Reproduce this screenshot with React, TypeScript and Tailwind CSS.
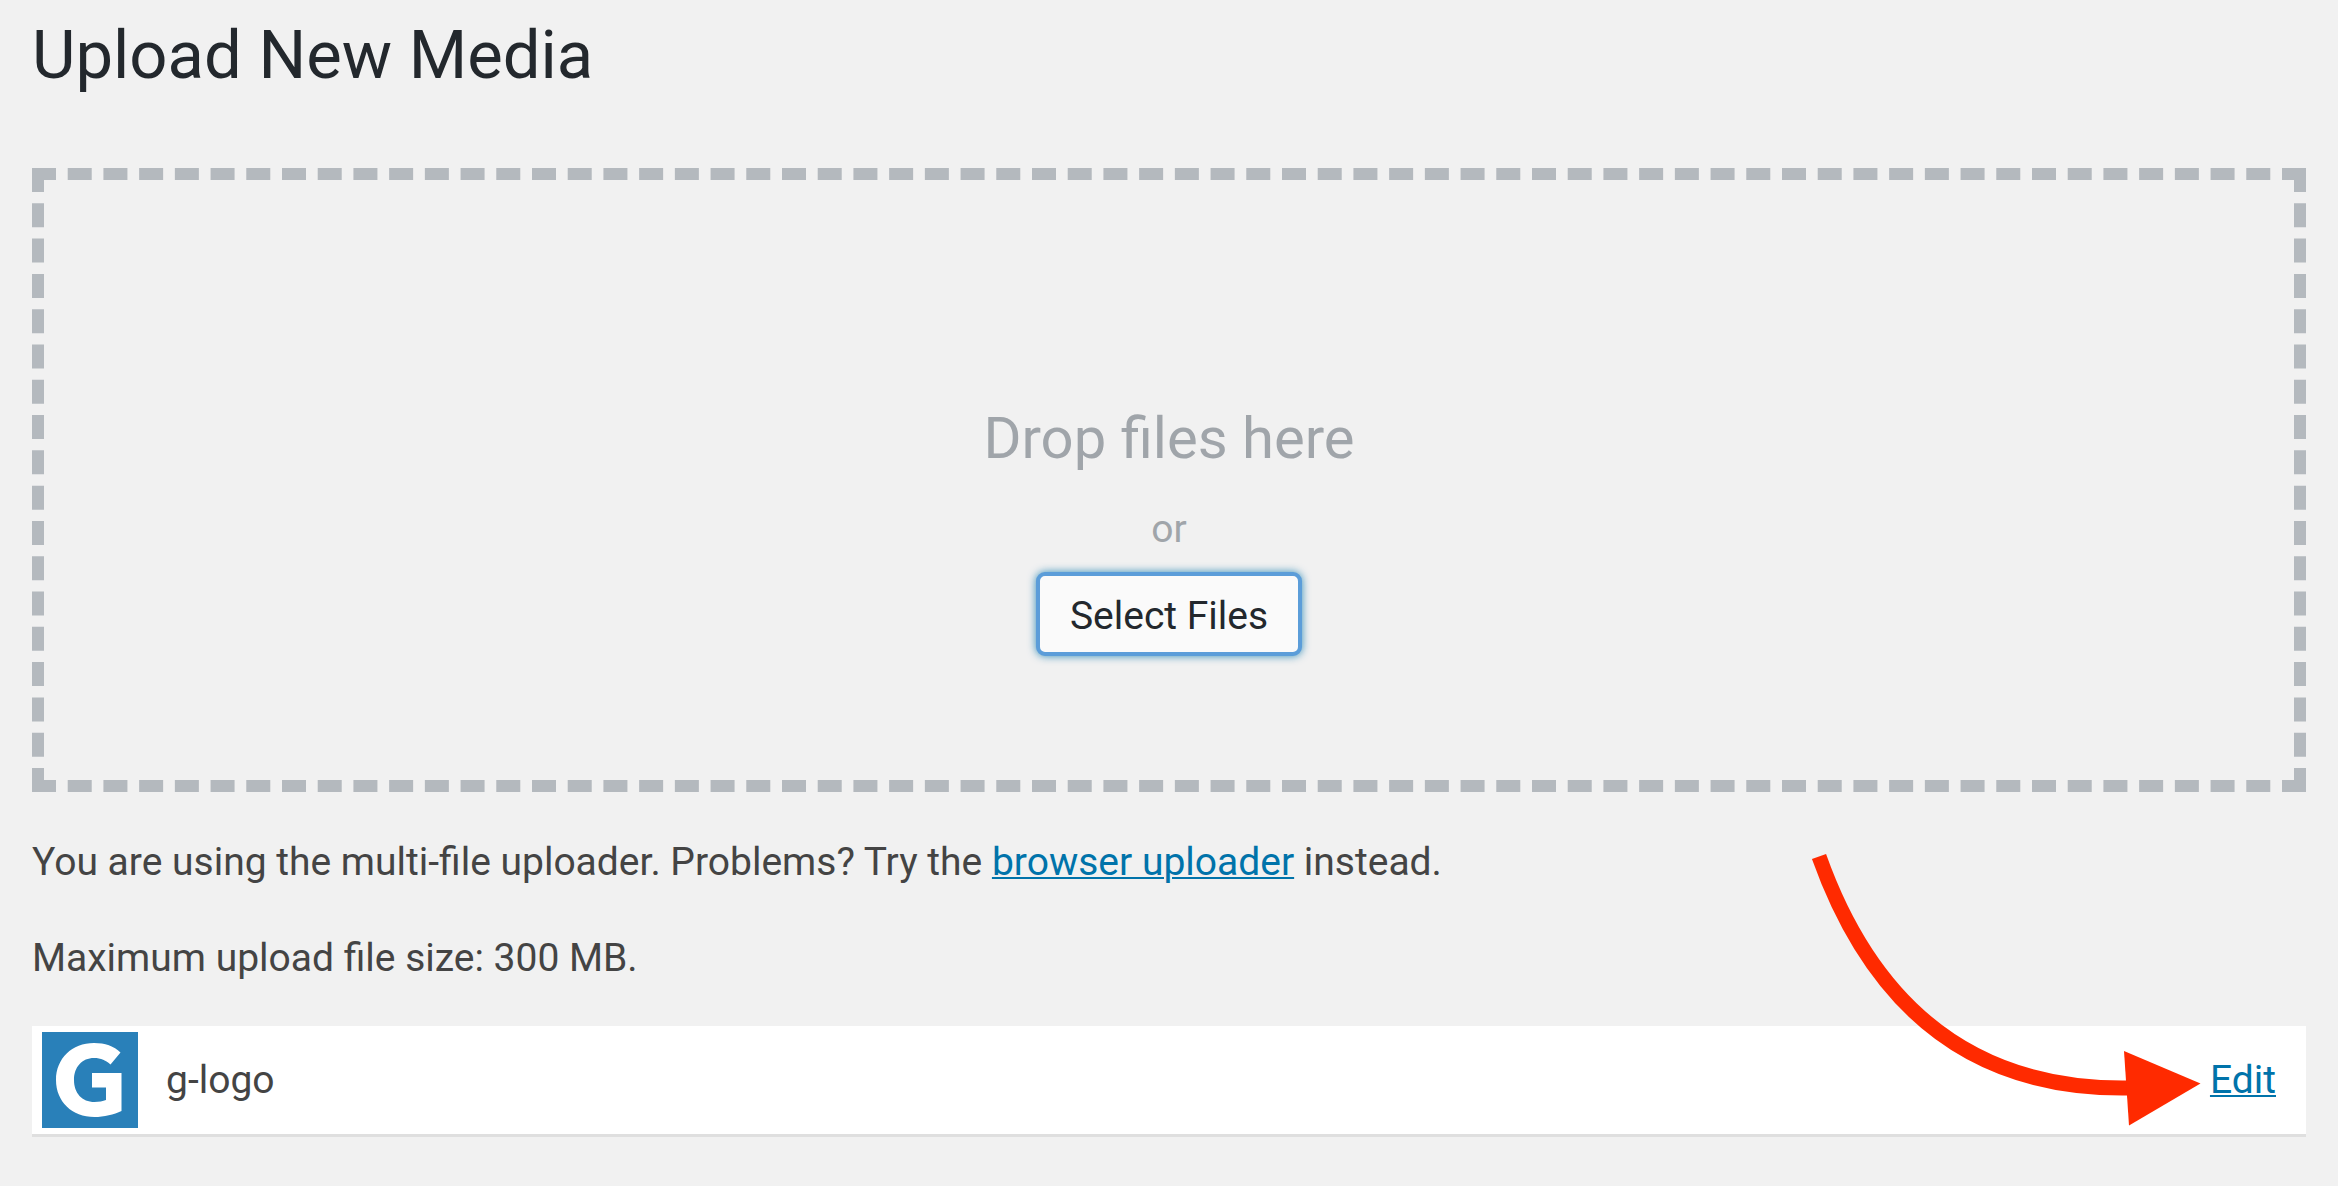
import React, { useRef } from 'react';

const GLogo: React.FC = () => (
  <svg viewBox="0 0 96 96" className="size-24 shrink-0" role="img" aria-label="g-logo thumbnail">
    <rect width="96" height="96" fill="#2980b9" />
    <path
      fill="#fff"
      d="M78.500 20.500C72 14 63 11 52 11C30 11 14 26.500 14 48C14 69.500 30 85 52.500 85C62 85 72 82.500 79.500 79V41H50V55.500H64V68C61 69.300 57 70 52.500 70C40 70 32 61 32 48C32 35 40 26 52 26C59 26 64 28.500 68.500 32.500Z"
    />
  </svg>
);

const Arrow: React.FC = () => (
  <svg
    viewBox="0 0 410 280"
    className="absolute bottom-1 right-24 w-[410px] h-[280px] pointer-events-none"
    aria-hidden="true"
  >
    <path d="M19 6.500Q103 242 330 238" fill="none" stroke="#ff2a00" strokeWidth="15" />
    <path d="M324 201L400.500 233.500L329 275.500Z" fill="#ff2a00" />
  </svg>
);

const App: React.FC = () => {
  const fileInput = useRef<HTMLInputElement>(null);

  return (
    <main className="min-h-screen w-full bg-[#f1f1f1] px-8 pt-4 pb-12 font-['Roboto','Liberation_Sans',sans-serif] text-[39px] leading-[60px] text-[#444]">
      <h1 className="text-[67px] leading-[78px] font-normal text-[#23282d]">Upload New Media</h1>

      {/* Drop zone */}
      <div className="mt-[74px] flex flex-col items-center border-12 border-dashed border-[#b4b9be] pt-[218px] pb-[124px]">
        <p className="text-[58px] leading-[80px] text-[#a0a5aa]">Drop files here</p>
        <p className="mt-[23px] leading-[56px] text-[#a0a5aa]">or</p>
        <input ref={fileInput} type="file" multiple className="hidden" aria-label="Files" />
        <button
          type="button"
          onClick={() => fileInput.current?.click()}
          className="mt-[15px] h-[84px] rounded-[9px] border-4 border-[#5b9dd9] bg-[#fafafa] px-[30px] pt-1 text-[#23282d] shadow-[0_0_9px_rgba(0,115,170,0.8)]"
        >
          Select Files
        </button>
      </div>

      <p className="mt-10">
        You are using the multi-file uploader. Problems? Try the{' '}
        <a href="#" className="text-[#0073aa] underline decoration-2 underline-offset-2">browser uploader</a> instead.
      </p>
      <p className="mt-9">Maximum upload file size: 300 MB.</p>

      {/* Uploaded files */}
      <ul className="mt-[38px]">
        <li className="relative flex items-center border-b-3 border-[#dfdfdf] bg-white py-1.5 pl-2.5 pr-[30px]">
          <GLogo />
          <span className="ml-7 flex-1">g-logo</span>
          <a href="#" className="text-[#0073aa] underline decoration-2 underline-offset-2">Edit</a>
          <Arrow />
        </li>
      </ul>
    </main>
  );
};

export default App;
